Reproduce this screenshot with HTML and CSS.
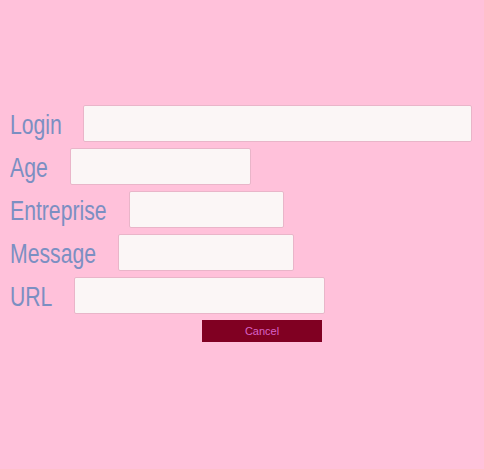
FILE: index.html
```html
<!DOCTYPE html>
<html lang="en">
<head>
    <meta charset="UTF-8">
    <meta name="viewport" content="width=device-width, initial-scale=1.0">
    <title>Form</title>
    <link rel="stylesheet" href="styles.css">
</head>
<body>
    <form class="formDiv">
        <div class="row">
            <label for="login" class="lbl lblLogin"><span>Login</span></label>
            <input type="text" name="login" id="login" class="field fieldLogin">
        </div>
        <div class="row">
            <label for="age" class="lbl lblAge"><span>Age</span></label>
            <input type="text" name="age" id="age" class="field fieldAge">
        </div>
        <div class="row">
            <label for="entreprise" class="lbl lblEntreprise"><span>Entreprise</span></label>
            <input type="text" name="entreprise" id="entreprise" class="field fieldEntreprise">
        </div>
        <div class="row">
            <label for="message" class="lbl lblMessage"><span>Message</span></label>
            <input type="text" name="message" id="message" class="field fieldMessage">
        </div>
        <div class="row">
            <label for="url" class="lbl lblUrl"><span>URL</span></label>
            <input type="text" name="url" id="url" class="field fieldUrl">
        </div>
        <button type="reset" class="cancel">Cancel</button>
    </form>
</body>
</html>
```

FILE: styles.css
```css
body{
    margin: 0;
    background: #ffc1da;
    font-family: "Liberation Sans", Arial, sans-serif;
}
.formDiv{
    padding: 105px 0 0 10px;
}
.row{
    display: flex;
    align-items: center;
    margin-bottom: 6px;
}
.lbl{
    flex: none;
    margin-right: 22px;
    padding-top: 4px;
    white-space: nowrap;
    color: #7b8fc2;
    font-size: 27px;
}
.lbl span{
    display: inline-block;
    transform: scaleX(0.785);
    transform-origin: left center;
}
.lblLogin{ width: 51px; }
.lblAge{ width: 38px; }
.lblEntreprise{ width: 97px; }
.lblMessage{ width: 86px; }
.lblUrl{ width: 42px; }

.field{
    box-sizing: border-box;
    height: 37px;
    margin: 0;
    padding: 0 6px;
    background: #fbf6f6;
    border: 1px solid #e9b5c9;
    border-radius: 2px;
    outline: none;
}
.fieldLogin{ width: 389px; }
.fieldAge{ width: 181px; }
.fieldEntreprise{ width: 155px; }
.fieldMessage{ width: 176px; }
.fieldUrl{ width: 251px; }

.cancel{
    display: block;
    width: 120px;
    height: 22px;
    margin-left: 192px;
    padding: 0;
    border: none;
    background: #800022;
    color: #d862c6;
    font-family: "Liberation Sans", Arial, sans-serif;
    font-size: 11px;
}
```
